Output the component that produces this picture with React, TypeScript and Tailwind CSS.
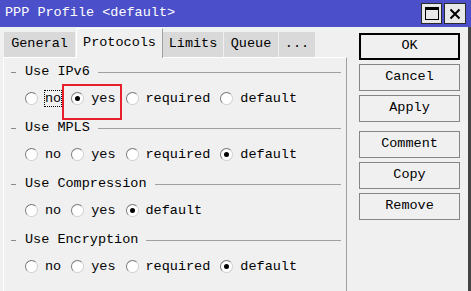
import React from "react";

const mono = { fontFamily: '"Liberation Mono", "DejaVu Sans Mono", monospace' };

interface Option {
  label: string;
  checked?: boolean;
  focused?: boolean;
}

interface Group {
  title: string;
  options: Option[];
}

const groups: Group[] = [
  {
    title: "Use IPv6",
    options: [
      { label: "no", focused: true },
      { label: "yes", checked: true },
      { label: "required" },
      { label: "default" },
    ],
  },
  {
    title: "Use MPLS",
    options: [{ label: "no" }, { label: "yes" }, { label: "required" }, { label: "default", checked: true }],
  },
  {
    title: "Use Compression",
    options: [{ label: "no" }, { label: "yes" }, { label: "default", checked: true }],
  },
  {
    title: "Use Encryption",
    options: [{ label: "no" }, { label: "yes" }, { label: "required" }, { label: "default", checked: true }],
  },
];

function Radio({ label, checked, focused }: Option) {
  return (
    <div className="flex items-center">
      <span className="flex h-[13px] w-[13px] items-center justify-center rounded-full border border-t-[#7a7a7a] border-l-[#7a7a7a] border-r-[#d0d0d0] border-b-[#d0d0d0] bg-white">
        {checked && <span className="h-[5px] w-[5px] rounded-full bg-black" />}
      </span>
      <span
        className={
          "ml-[7px] leading-[15px] " + (focused ? "outline outline-1 outline-dotted outline-black" : "")
        }
      >
        {label}
      </span>
    </div>
  );
}

function GroupBox({ title, options }: Group) {
  return (
    <div className="mb-[14px]">
      <div className="flex h-4 items-center">
        <span className="h-px w-[5px] bg-[#8a8a8a]" />
        <span className="ml-[9px] leading-4">{title}</span>
        <span className="ml-2 h-px flex-1 bg-[#a0a0a0]" />
      </div>
      <div className="mt-[10px] flex h-4 items-center gap-[10px] pl-[14px]">
        {options.map((o) => (
          <Radio key={o.label} {...o} />
        ))}
      </div>
    </div>
  );
}

function Button({ label, primary, className = "" }: { label: string; primary?: boolean; className?: string }) {
  return (
    <button
      className={
        "flex h-[27px] w-[101px] items-center justify-center bg-[#f0f0f0] text-[13.5px] text-black " +
        (primary ? "border-2 border-black" : "border border-[#858585]") +
        " " +
        className
      }
    >
      {label}
    </button>
  );
}

export default function App() {
  const tabs = ["General", "Protocols", "Limits", "Queue", "..."];
  const tabWidths = ["w-[72px]", "w-[87px]", "w-[61px]", "w-[55px]", "w-[37px]"];

  return (
    <div className="relative h-[291px] w-[471px] overflow-hidden bg-[#f0f0f0] text-[13.5px] text-black" style={mono}>
      {/* title bar */}
      <div className="flex h-[27px] items-center bg-[#4b4fc9] pl-[5px] pr-[5px]">
        <span className="flex-1 text-[13.5px] text-white">PPP Profile &lt;default&gt;</span>
        <div className="flex gap-[2px]">
          <span className="flex h-[21px] w-[21px] items-center justify-center border border-[#2a2a2a] bg-[#e8e8e8]">
            <span className="h-[13px] w-[14px] border border-t-[3px] border-black" />
          </span>
          <span className="flex h-[21px] w-[22px] items-center justify-center border border-[#2a2a2a] bg-[#e8e8e8]">
            <svg width="12" height="12" viewBox="0 0 12 12">
              <path d="M1.5 1.5 L10.5 10.5 M10.5 1.5 L1.5 10.5" stroke="black" strokeWidth="2" />
            </svg>
          </span>
        </div>
      </div>

      <div className="flex h-[264px] border-r-[3px] border-[#444]">
        {/* left tabbed area */}
        <div className="ml-[3px] flex w-[344px] flex-col">
          <div className="flex h-[30px] items-end pl-[1px]">
            {tabs.map((t, i) =>
              t === "Protocols" ? (
                <div
                  key={t}
                  className={`relative z-10 -mb-px flex h-[30px] items-center justify-center border-l border-t border-r border-l-white border-t-white border-r-[#a0a0a0] bg-[#f0f0f0] ${tabWidths[i]}`}
                >
                  {t}
                </div>
              ) : (
                <div
                  key={t}
                  className={`flex h-[25px] items-center justify-center border-r border-[#f0f0f0] bg-[#d9d9d9] ${tabWidths[i]}`}
                >
                  {t}
                </div>
              )
            )}
          </div>
          <div className="flex-1 border-l border-t border-r border-l-white border-t-white border-r-[#a0a0a0] pl-[7px] pr-[5px] pt-[6px]">
            {groups.map((g) => (
              <GroupBox key={g.title} {...g} />
            ))}
          </div>
        </div>

        {/* right buttons */}
        <div className="ml-[12px] flex flex-col gap-[4px] pt-[6px]">
          <Button label="OK" primary />
          <Button label="Cancel" />
          <Button label="Apply" />
          <Button label="Comment" className="mt-[5px]" />
          <Button label="Copy" />
          <Button label="Remove" />
        </div>
      </div>

      {/* red annotation box */}
      <div className="absolute left-[62px] top-[84px] h-[36px] w-[60px] border-2 border-[#e8202a]" />
    </div>
  );
}
